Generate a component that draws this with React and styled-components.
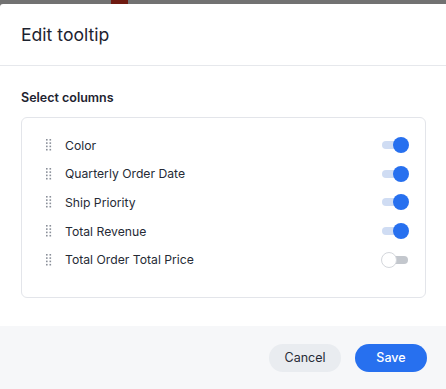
import React, { useState } from "react";
import styled, { createGlobalStyle } from "styled-components";

const GlobalStyle = createGlobalStyle`
  html, body {
    margin: 0;
    padding: 0;
    background: #727272;
    font-family: Inter, "Noto Sans", sans-serif;
  }
`;

const Backdrop = styled.div`
  position: relative;
  width: 446px;
  height: 389px;
  overflow: hidden;
  padding-top: 4px;
  box-sizing: border-box;
`;

const Peek = styled.div`
  position: absolute;
  top: 0;
  left: 111px;
  width: 17px;
  height: 4px;
  background: #6e1a10;
`;

const Modal = styled.div`
  background: #fff;
  border-top-left-radius: 3px;
  height: 385px;
  display: flex;
  flex-direction: column;
`;

const Header = styled.div`
  height: 61px;
  padding: 0 21px;
  display: flex;
  align-items: center;
  border-bottom: 1px solid #e6e8ec;
  font-size: 17.6px;
  color: #1d2330;
`;

const Body = styled.div`
  flex: 1;
  padding: 24px 20px 0 21px;
`;

const Label = styled.div`
  font-size: 12.5px;
  font-weight: 600;
  color: #1d2330;
  margin-bottom: 12px;
`;

const Card = styled.div`
  border: 1px solid #e3e5ea;
  border-radius: 6px;
  height: 181px;
  box-sizing: border-box;
  padding: 13px 17px 0 24px;
`;

const Row = styled.div`
  display: flex;
  align-items: center;
  height: 28.6px;
`;

const Name = styled.span`
  flex: 1;
  margin-left: 13px;
  font-size: 12.2px;
  color: #262b36;
`;

const Track = styled.button`
  position: relative;
  width: 26px;
  height: 8px;
  border: none;
  padding: 0;
  border-radius: 4px;
  background: ${(p) => (p.$on ? "#cfdcf3" : "#c3c7cd")};
  cursor: pointer;
`;

const Knob = styled.span`
  position: absolute;
  top: -4px;
  left: ${(p) => (p.$on ? "11px" : "-1px")};
  width: 16px;
  height: 16px;
  border-radius: 50%;
  box-sizing: border-box;
  background: ${(p) => (p.$on ? "#2770ef" : "#fff")};
  border: ${(p) => (p.$on ? "none" : "1px solid #d4d7dc")};
`;

const Footer = styled.div`
  height: 63px;
  background: #f6f7f9;
  display: flex;
  justify-content: flex-end;
  align-items: center;
  gap: 14px;
  padding: 0 19px 0 0;
`;

const Button = styled.button`
  width: 72px;
  height: 28px;
  border: none;
  border-radius: 14px;
  font-family: inherit;
  font-size: 12.5px;
  background: ${(p) => (p.$primary ? "#2770ef" : "#e9ecf0")};
  color: ${(p) => (p.$primary ? "#fff" : "#262b36")};
  font-weight: ${(p) => (p.$primary ? 500 : 400)};
  cursor: pointer;
`;

const Handle = () => (
  <svg width="6" height="12" viewBox="0 0 6 12">
    {[0, 1, 2, 3].map((r) =>
      [0, 1].map((c) => (
        <rect key={`${r}-${c}`} x={c * 3.5} y={r * 3.3} width="1.6" height="1.6" fill="#8a8f99" />
      ))
    )}
  </svg>
);

const initial = [
  { name: "Color", on: true },
  { name: "Quarterly Order Date", on: true },
  { name: "Ship Priority", on: true },
  { name: "Total Revenue", on: true },
  { name: "Total Order Total Price", on: false },
];

export default function App() {
  const [cols, setCols] = useState(initial);
  const toggle = (i) =>
    setCols(cols.map((c, j) => (j === i ? { ...c, on: !c.on } : c)));

  return (
    <Backdrop>
      <GlobalStyle />
      <Peek />
      <Modal>
        <Header>Edit tooltip</Header>
        <Body>
          <Label>Select columns</Label>
          <Card>
            {cols.map((c, i) => (
              <Row key={c.name}>
                <Handle />
                <Name>{c.name}</Name>
                <Track $on={c.on} onClick={() => toggle(i)}>
                  <Knob $on={c.on} />
                </Track>
              </Row>
            ))}
          </Card>
        </Body>
        <Footer>
          <Button>Cancel</Button>
          <Button $primary>Save</Button>
        </Footer>
      </Modal>
    </Backdrop>
  );
}
